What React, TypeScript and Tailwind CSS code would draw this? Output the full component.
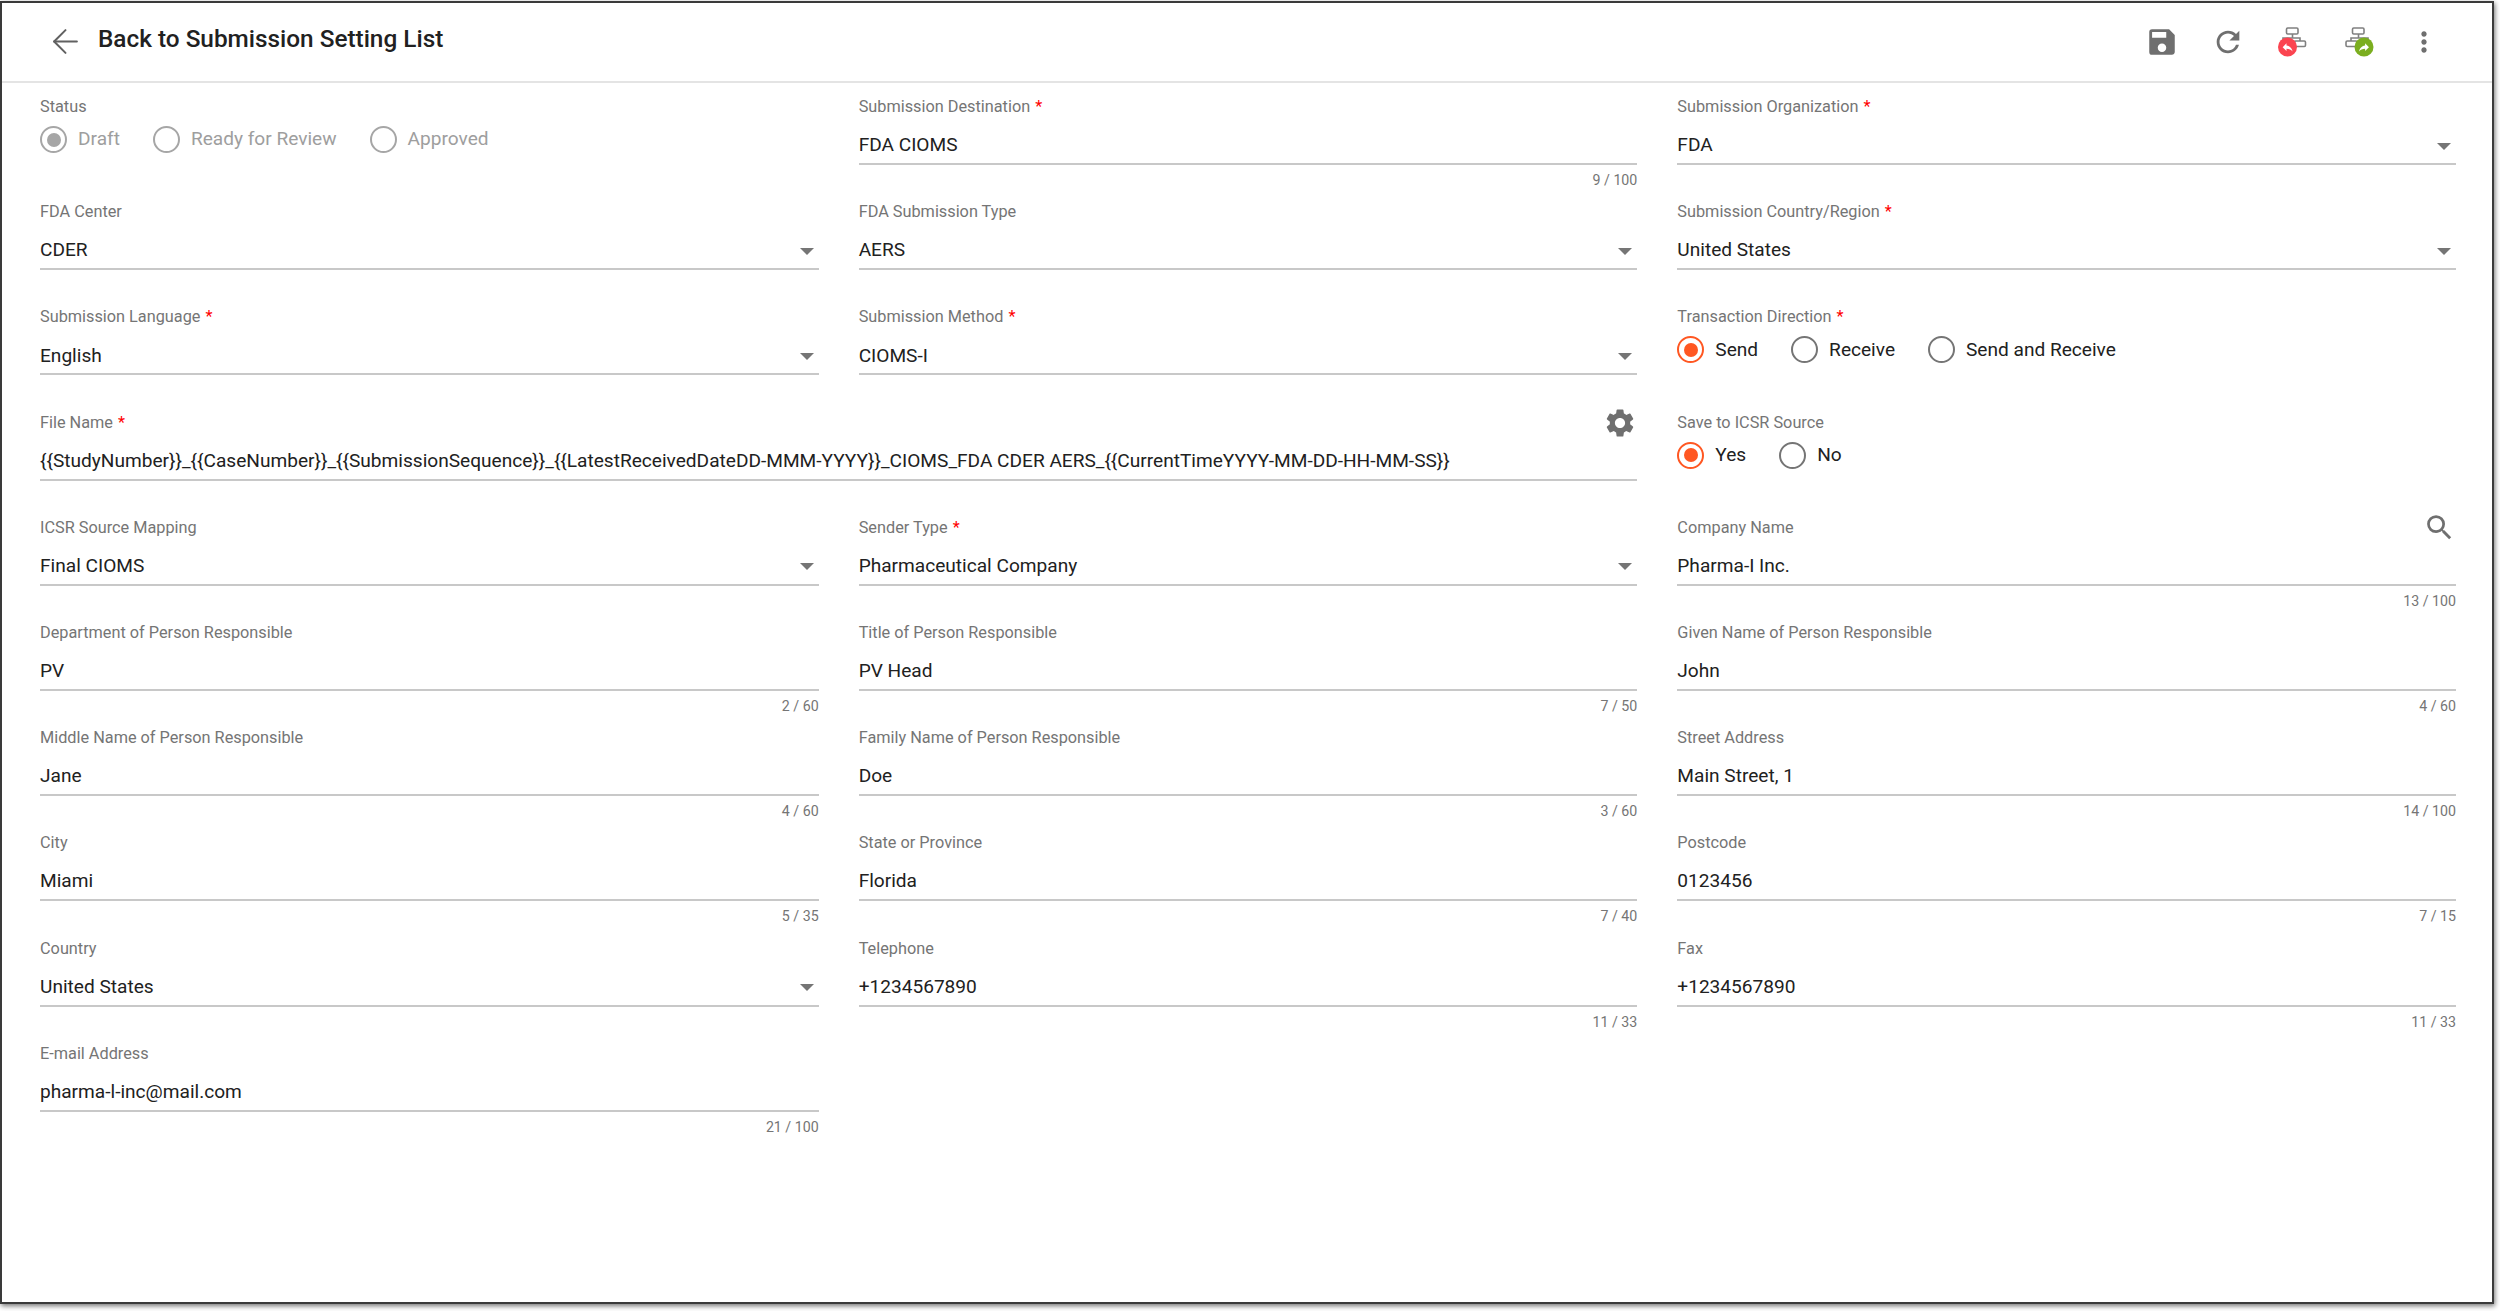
import { ArrowLeft } from 'lucide-react';
import { MdMoreVert, MdRefresh, MdSave, MdSearch, MdSettings } from 'react-icons/md';

type FieldProps = {
  label: string;
  value: string;
  required?: boolean;
  select?: boolean;
  counter?: string;
};

function Label({ text, required }: { text: string; required?: boolean }) {
  return (
    <span className="text-[16.3px] leading-[24px] text-[#757575]">
      {text}
      {required && <span className="ml-[5px] text-[#f00]">*</span>}
    </span>
  );
}

function Field({ label, value, required, select, counter }: FieldProps) {
  return (
    <div>
      <div className="h-[24px]">
        <Label text={label} required={required} />
      </div>
      <div className="flex h-[46px] items-center justify-between border-b-2 border-[#c8c8c8] pt-[9px] text-[19.1px] text-[#212121]">
        <span>{value}</span>
        {select && <Caret />}
      </div>
      {counter && <div className="mt-[5px] text-right text-[14.2px] leading-[20px] text-[#757575]">{counter}</div>}
    </div>
  );
}

function Caret() {
  return <span className="mr-[5px] mt-[1px] h-0 w-0 border-x-[7px] border-t-[7px] border-x-transparent border-t-[#757575]" />;
}

function Radio({ label, checked, disabled }: { label: string; checked?: boolean; disabled?: boolean }) {
  let ring = 'border-[#757575]';
  if (disabled) ring = 'border-[#a6a6a6]';
  else if (checked) ring = 'border-[#ff5722]';
  const dot = disabled ? 'bg-[#a6a6a6]' : 'bg-[#ff5722]';
  return (
    <div className="flex items-center gap-[11px]">
      <span className={`flex h-[27px] w-[27px] items-center justify-center rounded-full border-[2.5px] ${ring}`}>
        {checked && <span className={`h-[14px] w-[14px] rounded-full ${dot}`} />}
      </span>
      <span className={`text-[19.1px] ${disabled ? 'text-[#9e9e9e]' : 'text-[#212121]'}`}>{label}</span>
    </div>
  );
}

function RadioField({ label, required, children }: { label: string; required?: boolean; children: React.ReactNode }) {
  return (
    <div>
      <div className="h-[24px]">
        <Label text={label} required={required} />
      </div>
      <div className="mt-[7px] flex h-[27px] items-center gap-[33px]">{children}</div>
    </div>
  );
}

function OrgReturn() {
  return (
    <svg width="30" height="30" viewBox="0 0 30 30" fill="none" className="ml-[-2px] mt-[-1px]">
      <g stroke="#808080" strokeWidth="1.6">
        <rect x="9.5" y="1" width="11.5" height="6" rx="1.2" />
        <path d="M15.5 7v4M6 14v-3h17v3" />
        <rect x="17.5" y="14" width="11" height="5.5" rx="1.2" />
      </g>
      <circle cx="10.5" cy="20" r="9.5" fill="#fb4450" />
      <path transform="translate(4 13.6) scale(.55)" d="M10 9V5l-7 7 7 7v-4.1c5 0 8.5 1.6 11 5.1-1-5-4-10-11-11z" fill="#fff" />
    </svg>
  );
}

function OrgSend() {
  return (
    <svg width="30" height="30" viewBox="0 0 30 30" fill="none" className="ml-[3px] mt-[-1px]">
      <g stroke="#808080" strokeWidth="1.6">
        <rect x="7.5" y="1" width="11.5" height="6" rx="1.2" />
        <path d="M13.5 7v4M6 14v-3h17v3" />
        <rect x="1" y="14" width="11" height="5.5" rx="1.2" />
      </g>
      <circle cx="19" cy="20" r="9.5" fill="#7bae1f" />
      <path transform="translate(12.4 13.6) scale(.55)" d="M14 9V5l7 7-7 7v-4.1c-5 0-8.5 1.6-11 5.1 1-5 4-10 11-11z" fill="#fff" />
    </svg>
  );
}

const iconBox = 'flex w-[65.5px] items-center justify-center text-[#6f6f6f]';

export default function App() {
  return (
    <div className="h-[1311px] bg-white font-[Roboto,sans-serif]">
      <div className="relative top-[1px] h-[1303px] w-[2494px] border-2 border-[#3a3a3a] bg-white shadow-[1px_2px_5px_rgba(0,0,0,0.55)]">
        <header className="flex h-[80px] items-center justify-between border-b-2 border-[#e4e4e4] pl-[44px] pr-[35px]">
          <div className="flex items-center gap-[13px]">
            <ArrowLeft size={39} strokeWidth={1.25} className="text-[#616161]" />
            <h1 className="mb-[5px] text-[24.35px] font-medium text-[#212121]">Back to Submission Setting List</h1>
          </div>
          <div className="flex items-center">
            <div className={iconBox}><MdSave size={34} /></div>
            <div className={iconBox}><MdRefresh size={34} /></div>
            <div className={iconBox}><OrgReturn /></div>
            <div className={iconBox}><OrgSend /></div>
            <div className={iconBox}><MdMoreVert size={32} /></div>
          </div>
        </header>

        <main className="grid auto-rows-[105.2px] grid-cols-3 gap-x-[40px] pl-[38px] pr-[36px] pt-[12px]">
          <RadioField label="Status">
            <Radio label="Draft" checked disabled />
            <Radio label="Ready for Review" disabled />
            <Radio label="Approved" disabled />
          </RadioField>
          <Field label="Submission Destination" required value="FDA CIOMS" counter="9 / 100" />
          <Field label="Submission Organization" required value="FDA" select />

          <Field label="FDA Center" value="CDER" select />
          <Field label="FDA Submission Type" value="AERS" select />
          <Field label="Submission Country/Region" required value="United States" select />

          <Field label="Submission Language" required value="English" select />
          <Field label="Submission Method" required value="CIOMS-I" select />
          <RadioField label="Transaction Direction" required>
            <Radio label="Send" checked />
            <Radio label="Receive" />
            <Radio label="Send and Receive" />
          </RadioField>

          <div className="col-span-2">
            <div className="flex h-[24px] items-center justify-between">
              <Label text="File Name" required />
              <MdSettings size={34} className="text-[#6f6f6f]" />
            </div>
            <div className="flex h-[46px] items-center border-b-2 border-[#c8c8c8] pt-[9px] text-[19.1px] text-[#212121]">
              {'{{StudyNumber}}_{{CaseNumber}}_{{SubmissionSequence}}_{{LatestReceivedDateDD-MMM-YYYY}}_CIOMS_FDA CDER AERS_{{CurrentTimeYYYY-MM-DD-HH-MM-SS}}'}
            </div>
          </div>
          <RadioField label="Save to ICSR Source">
            <Radio label="Yes" checked />
            <Radio label="No" />
          </RadioField>

          <Field label="ICSR Source Mapping" value="Final CIOMS" select />
          <Field label="Sender Type" required value="Pharmaceutical Company" select />
          <div>
            <div className="flex h-[24px] items-center justify-between">
              <Label text="Company Name" />
              <MdSearch size={33} className="text-[#6f6f6f]" />
            </div>
            <div className="flex h-[46px] items-center border-b-2 border-[#c8c8c8] pt-[9px] text-[19.1px] text-[#212121]">Pharma-I Inc.</div>
            <div className="mt-[5px] text-right text-[14.2px] leading-[20px] text-[#757575]">13 / 100</div>
          </div>

          <Field label="Department of Person Responsible" value="PV" counter="2 / 60" />
          <Field label="Title of Person Responsible" value="PV Head" counter="7 / 50" />
          <Field label="Given Name of Person Responsible" value="John" counter="4 / 60" />

          <Field label="Middle Name of Person Responsible" value="Jane" counter="4 / 60" />
          <Field label="Family Name of Person Responsible" value="Doe" counter="3 / 60" />
          <Field label="Street Address" value="Main Street, 1" counter="14 / 100" />

          <Field label="City" value="Miami" counter="5 / 35" />
          <Field label="State or Province" value="Florida" counter="7 / 40" />
          <Field label="Postcode" value="0123456" counter="7 / 15" />

          <Field label="Country" value="United States" select />
          <Field label="Telephone" value="+1234567890" counter="11 / 33" />
          <Field label="Fax" value="+1234567890" counter="11 / 33" />

          <Field label="E-mail Address" value="pharma-l-inc@mail.com" counter="21 / 100" />
        </main>
      </div>
    </div>
  );
}
